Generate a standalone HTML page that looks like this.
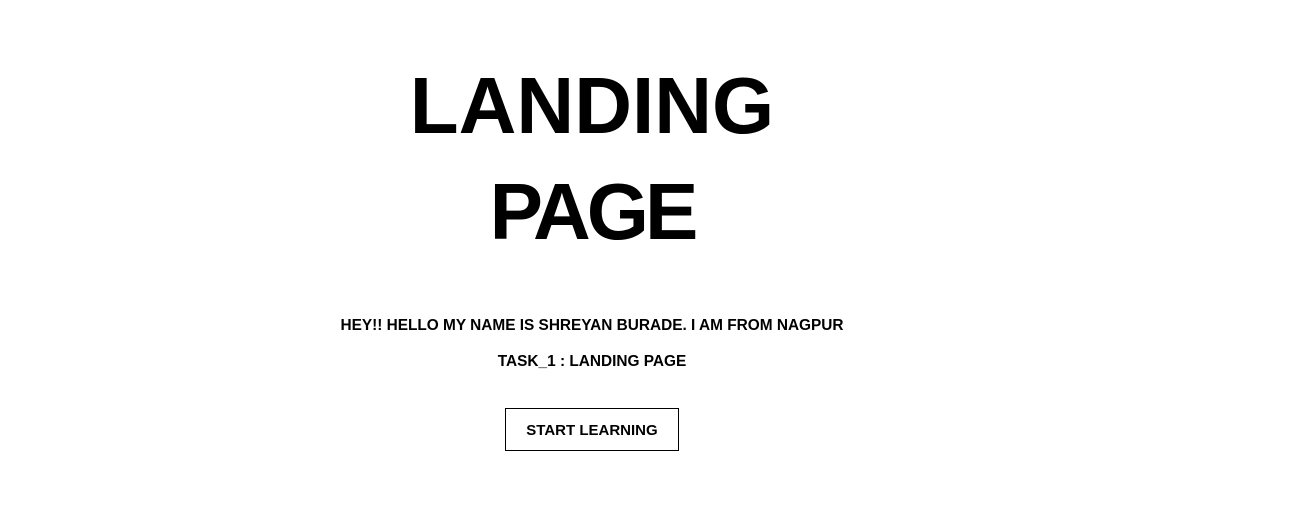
<!DOCTYPE html>
<html><head><meta charset="utf-8"><style>
body{margin:0;background:#fff;width:1307px;height:514px;position:relative;font-family:"Liberation Sans",sans-serif;font-weight:bold;color:#000;overflow:hidden}
.c{position:absolute;left:92px;width:1000px;text-align:center;white-space:nowrap}
.t{font-size:80px;line-height:80px}
.s{font-size:15.4px;line-height:16px}
.btn{position:absolute;left:505px;top:408px;width:172px;height:41px;border:1px solid #000;font-size:15px;line-height:44px;text-align:center}
</style></head><body>
<div class="c t" style="top:66px">LANDING</div>
<div class="c t" style="top:172px;letter-spacing:-4px">PAGE</div>
<div class="c s" style="top:318px">HEY!! HELLO MY NAME IS SHREYAN BURADE. I AM FROM NAGPUR</div>
<div class="c s" style="top:354px">TASK_1 : LANDING PAGE</div>
<div class="btn">START LEARNING</div>
</body></html>
